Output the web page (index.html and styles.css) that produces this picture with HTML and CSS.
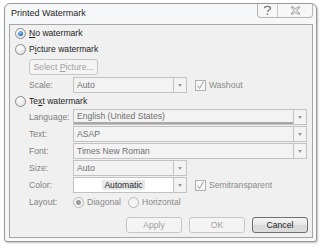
FILE: index.html
```html
<!DOCTYPE html>
<html>
<head>
<meta charset="utf-8">
<link rel="stylesheet" href="styles.css">
</head>
<body>
<div class="window">
  <div class="titlebar">
    <span class="title">Printed Watermark</span>
    <div class="caption-btns">
      <span class="cbtn help"><svg width="9" height="11" viewBox="0 0 9 11"><path d="M1.5 3.2 C1.5 0.8 7.5 0.8 7.5 3.2 C7.5 5 4.5 5 4.5 7" fill="none" stroke="#777" stroke-width="1.2"/><rect x="3.8" y="8.3" width="1.5" height="1.5" fill="#777"/></svg></span>
      <span class="cbtn close"><svg width="11" height="9" viewBox="0 0 11 9"><path d="M1 1 L3.5 1 L5.5 3 L7.5 1 L10 1 L7 4.5 L10 8 L7.5 8 L5.5 6 L3.5 8 L1 8 L4 4.5 Z" fill="#e9e9e9" stroke="#8a8a8a" stroke-width="0.8"/></svg></span>
    </div>
  </div>
  <div class="panel">
    <div class="radio-row"><span class="radio on"></span><span class="txt"><u>N</u>o watermark</span></div>
    <div class="radio-row"><span class="radio"></span><span class="txt">P<u>i</u>cture watermark</span></div>
    <div class="sub"><span class="btn select-pic"><span>Select <u>P</u>icture...</span></span></div>
    <div class="sub field-row scale-row">
      <span class="lbl">Scale:</span>
      <div class="combo short"><span class="val">Auto</span><span class="arrow"></span></div>
      <span class="check on"><svg width="9" height="9" viewBox="0 0 9 9"><path d="M1.5 4.5 L3.5 7.5 L7.5 0.5" fill="none" stroke="#a0a0a0" stroke-width="1"/></svg></span>
      <span class="check-lbl">Washout</span>
    </div>
    <div class="radio-row"><span class="radio"></span><span class="txt">Te<u>x</u>t watermark</span></div>
    <div class="rows">
      <div class="sub field-row">
        <span class="lbl">Language:</span>
        <div class="combo long underline"><span class="val">English (United States)</span><span class="arrow"></span></div>
      </div>
      <div class="sub field-row">
        <span class="lbl">Text:</span>
        <div class="combo long"><span class="val">ASAP</span><span class="arrow"></span></div>
      </div>
      <div class="sub field-row">
        <span class="lbl">Font:</span>
        <div class="combo long"><span class="val">Times New Roman</span><span class="arrow"></span></div>
      </div>
      <div class="sub field-row">
        <span class="lbl">Size:</span>
        <div class="combo short"><span class="val">Auto</span><span class="arrow"></span></div>
      </div>
      <div class="sub field-row">
        <span class="lbl">Color:</span>
        <div class="combo short white"><span class="val center"><span class="hl">Automatic</span></span><span class="arrow"></span></div>
        <span class="check on"><svg width="9" height="9" viewBox="0 0 9 9"><path d="M1.5 4.5 L3.5 7.5 L7.5 0.5" fill="none" stroke="#a0a0a0" stroke-width="1"/></svg></span>
        <span class="check-lbl">Semitransparent</span>
      </div>
      <div class="sub field-row">
        <span class="lbl">Layout:</span>
        <span class="radio dis on"></span><span class="opt">Diagonal</span>
        <span class="radio dis"></span><span class="opt">Horizontal</span>
      </div>
    </div>
    <div class="buttons">
      <span class="btn dbtn">Apply</span>
      <span class="btn dbtn">OK</span>
      <span class="btn cancel">Cancel</span>
    </div>
  </div>
</div>
</body>
</html>
```

FILE: styles.css
```css
html, body {
  margin: 0;
  padding: 0;
  background: #ffffff;
}
body {
  width: 320px;
  height: 248px;
  overflow: hidden;
  font-family: "Liberation Sans", Arial, sans-serif;
  font-size: 8.6px;
  color: #1e1e1e;
}
u { text-decoration: underline; text-underline-offset: 1px; }

.window {
  margin: 3px 3px 0 4px;
  height: 239px;
  box-sizing: border-box;
  border: 1px solid #9a9a9a;
  border-radius: 6px 6px 3px 3px;
  background: #f6f7f9;
  box-shadow: 1px 1px 2px rgba(0,0,0,0.25);
  display: flex;
  flex-direction: column;
}
.titlebar {
  height: 20px;
  display: flex;
  justify-content: space-between;
  align-items: flex-start;
}
.title {
  padding: 4px 0 0 6px;
  font-size: 9px;
  color: #1e1e1e;
}
.caption-btns {
  display: flex;
  margin-right: 3px;
  border: 1px solid #b4b4b4;
  border-top: none;
  border-radius: 0 0 4px 4px;
  background: #f7f7f7;
  height: 13px;
}
.cbtn {
  display: flex;
  align-items: center;
  justify-content: center;
  height: 13px;
}
.help { width: 19px; border-right: 1px solid #c8c8c8; }
.close { width: 34px; }

.panel {
  margin: 0 3px 3px 4px;
  flex: 1;
  border: 1px solid #a5a5a5;
  background: #f0f0f0;
  padding: 0 0 0 5px;
}
.radio-row {
  height: 16px;
  display: flex;
  align-items: center;
}
.radio {
  width: 9px;
  height: 9px;
  border-radius: 50%;
  border: 1px solid #8d8d8d;
  background: radial-gradient(circle at 40% 35%, #ffffff 0%, #e6e6e6 70%, #d0d0d0 100%);
  display: inline-block;
  position: relative;
  flex: none;
}
.radio.on::after {
  content: "";
  position: absolute;
  left: 2px;
  top: 2px;
  width: 5px;
  height: 5px;
  border-radius: 50%;
  background: radial-gradient(circle at 40% 35%, #9fd3f5 0%, #2a78c5 60%, #1d4f8a 100%);
}
.radio.dis { border-color: #b4b4b4; background: #f4f4f4; }
.radio.dis.on::after { background: #9a9a9a; }
.radio-row .txt { margin-left: 3px; }

.sub { margin-left: 14px; }
.btn {
  display: inline-flex;
  align-items: center;
  justify-content: center;
  box-sizing: border-box;
  height: 16px;
  border: 1px solid #c6c6c6;
  border-radius: 3px;
  background: #f4f4f4;
  color: #a0a0a0;
}
.select-pic {
  margin-top: 2px;
  width: 69px;
}
.field-row {
  height: 16px;
  display: flex;
  align-items: center;
}
.scale-row { margin-top: 2px; }
.lbl {
  width: 44px;
  color: #808080;
  flex: none;
}
.combo {
  box-sizing: border-box;
  height: 16px;
  display: flex;
  border: 1px solid #c2c2c2;
  background: #f3f3f3;
  flex: none;
}
.combo .val {
  flex: 1;
  padding-left: 3px;
  color: #707070;
  display: flex;
  align-items: center;
  white-space: nowrap;
  overflow: hidden;
}
.combo .val.center { justify-content: center; padding-left: 0; color: #1e1e1e; }
.combo .hl { background: #e8e8e8; padding: 0 2px; }
.combo.short { width: 114px; }
.combo.long { width: 234px; }
.combo.white { background: #ffffff; }
.combo.underline .val { border-bottom: 2px solid #a8a8a8; }
.arrow {
  width: 12px;
  border-left: 1px solid #c2c2c2;
  background: #f3f3f3;
  position: relative;
  flex: none;
}
.arrow::after {
  content: "";
  position: absolute;
  left: 4px;
  top: 6px;
  border-left: 2.5px solid transparent;
  border-right: 2.5px solid transparent;
  border-top: 3px solid #999;
}
.check {
  box-sizing: border-box;
  width: 11px;
  height: 11px;
  border: 1px solid #b0b0b0;
  background: #f6f6f6;
  margin-left: 8px;
  display: flex;
  align-items: center;
  justify-content: center;
  flex: none;
}
.check-lbl { margin-left: 3px; color: #8a8a8a; }

.rows {
  display: flex;
  flex-direction: column;
  gap: 1px;
}
.opt { margin: 0 7px 0 3px; color: #8a8a8a; }

.buttons {
  display: flex;
  justify-content: flex-end;
  gap: 7px;
  margin: 7px 4px 0 0;
}
.dbtn, .cancel { width: 56px; }
.cancel {
  border-color: #707070;
  color: #1e1e1e;
  background: linear-gradient(#f4f4f4, #e6e6e6 50%, #d8d8d8 51%, #dddddd);
}
```
